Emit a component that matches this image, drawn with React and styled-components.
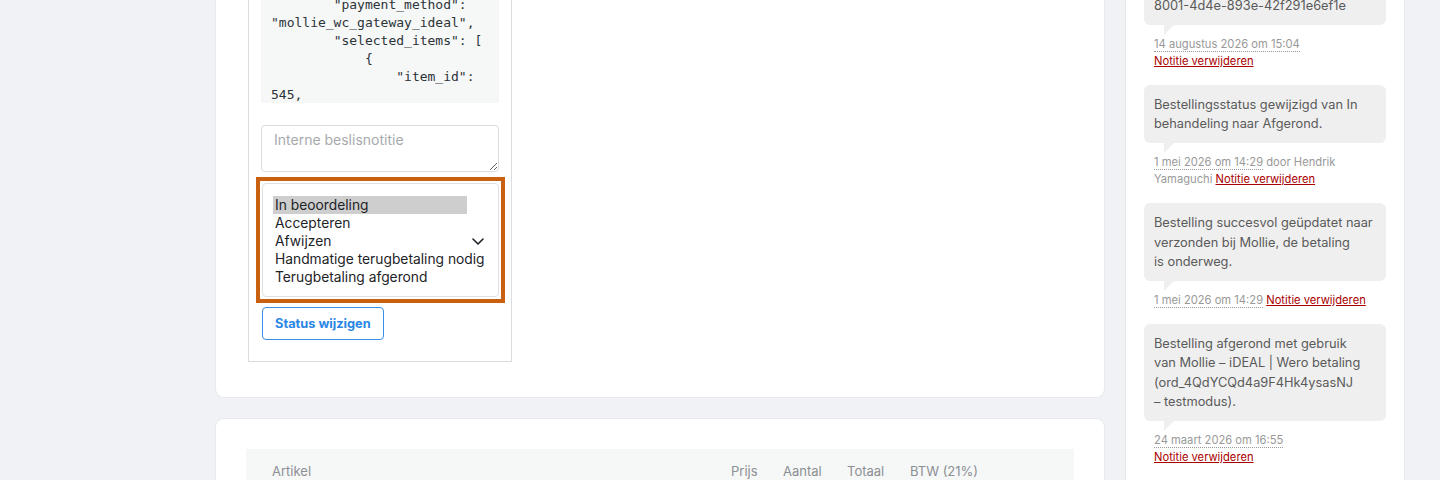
import styled, { createGlobalStyle } from 'styled-components';

const GlobalStyle = createGlobalStyle`
  html, body {
    margin: 0;
    padding: 0;
    overflow: hidden;
    background: #f0f2f6;
  }
  body {
    font-family: Inter, "Noto Sans", sans-serif;
    color: #1d2327;
  }
`;

const payload = `{
    "decision": "pending",
    "request": {
        "payment_method": "mollie_wc_gateway_ideal",
        "selected_items": [
            {
                "item_id": 545,
                "quantity": 1
            }
        ]
    }
}`;

const statuses = [
  'In beoordeling',
  'Accepteren',
  'Afwijzen',
  'Handmatige terugbetaling nodig',
  'Terugbetaling afgerond',
];

// lines are kept as shown in the order screen
const notes = [
  {
    lines: [
      'Mollie-webhook ontvangen voor',
      'transactie ab93c0f2-',
      '8001-4d4e-893e-42f291e6ef1e',
    ],
    date: '14 augustus 2026 om 15:04',
  },
  {
    lines: ['Bestellingsstatus gewijzigd van In', 'behandeling naar Afgerond.'],
    date: '1 mei 2026 om 14:29',
    author: 'Hendrik Yamaguchi',
  },
  {
    lines: [
      'Bestelling succesvol geüpdatet naar',
      'verzonden bij Mollie, de betaling',
      'is onderweg.',
    ],
    date: '1 mei 2026 om 14:29',
  },
  {
    lines: [
      'Bestelling afgerond met gebruik',
      'van Mollie – iDEAL | Wero betaling',
      '(ord_4QdYCQd4a9F4Hk4ysasNJ',
      '– testmodus).',
    ],
    date: '24 maart 2026 om 16:55',
  },
];

export default function App() {
  return (
    <>
      <GlobalStyle />
      <Page>
        <Main>
          <Card $padding="32px 32px 35px">
            <DecisionBox>
              <Payload>{payload}</Payload>
              <NoteField placeholder="Interne beslisnotitie" />
              <Highlight>
                <Listbox role="listbox">
                  {statuses.map((status, i) => (
                    <Option key={status} $selected={i === 0}>
                      {status}
                    </Option>
                  ))}
                  <Chevron width="12" height="7" viewBox="0 0 12 7">
                    <path
                      d="M1 1l5 5 5-5"
                      fill="none"
                      stroke="#1d2327"
                      strokeWidth="1.6"
                      strokeLinecap="round"
                      strokeLinejoin="round"
                    />
                  </Chevron>
                </Listbox>
              </Highlight>
              <OutlineButton type="button">Status wijzigen</OutlineButton>
            </DecisionBox>
          </Card>

          <Card $padding="30px">
            <TableHead>
              <span>Artikel</span>
              <span>Prijs</span>
              <span>Aantal</span>
              <span>Totaal</span>
              <span>BTW (21%)</span>
            </TableHead>
            <TableRow>
              <span>Retourpakket – standaard</span>
              <span>€ 24,95</span>
              <span>× 1</span>
              <span>€ 24,95</span>
              <span>€ 4,33</span>
            </TableRow>
          </Card>
        </Main>

        <Side>
          <SideTitle>Bestelnotities</SideTitle>
          <NoteList>
            {notes.map((note, i) => (
              <Note key={i}>
                <Bubble>
                  {note.lines.map((line, j) => (
                    <BubbleLine key={j}>{line}</BubbleLine>
                  ))}
                </Bubble>
                <Meta>
                  <ExactDate title={note.date}>{note.date}</ExactDate>
                  {note.author ? ` door ${note.author}` : ''}{' '}
                  <DeleteLink href="#">Notitie verwijderen</DeleteLink>
                </Meta>
              </Note>
            ))}
          </NoteList>
        </Side>
      </Page>
    </>
  );
}

const Page = styled.div`
  display: grid;
  grid-template-columns: 888px 278px;
  column-gap: 22px;
  padding-left: 216px;
  margin-top: -113px;
`;

const Main = styled.div`
  display: flex;
  flex-direction: column;
  gap: 22px;
`;

const Card = styled.section`
  background: #fff;
  border-radius: 8px;
  box-shadow: 0 0 0 1px #e6e9ee;
  padding: ${(p) => p.$padding};
`;

const DecisionBox = styled.div`
  box-sizing: border-box;
  width: 264px;
  border: 1px solid #dcdcde;
  padding: 12px 12px 21px;
  display: flex;
  flex-direction: column;
  align-items: flex-start;
`;

const Payload = styled.pre`
  box-sizing: border-box;
  width: 238px;
  max-height: 171px;
  overflow: hidden;
  margin: 0;
  padding: 10px;
  background: #f6f7f7;
  color: #2c3338;
  font-family: "DejaVu Sans Mono", "Liberation Mono", monospace;
  font-size: 13px;
  line-height: 18px;
  white-space: pre-wrap;
`;

const NoteField = styled.textarea`
  box-sizing: border-box;
  width: 238px;
  height: 47px;
  margin-top: 22px;
  padding: 4px 12px;
  border: 1px solid #dcdcde;
  border-radius: 4px;
  font-family: Inter, "Noto Sans", sans-serif;
  font-size: 14px;
  line-height: 20px;
  color: #1d2327;
  &::placeholder {
    color: #a7aaad;
  }
`;

const Highlight = styled.div`
  margin-top: 11px;
  margin-left: 1px;
  outline: 4px solid #c8600f;
  outline-offset: 2px;
`;

const Listbox = styled.div`
  box-sizing: border-box;
  position: relative;
  width: 237px;
  height: 114px;
  padding: 12px 10px;
  border: 1px solid #e0e0e2;
  border-radius: 4px;
  background: #fff;
  font-size: 13.8px;
  line-height: 18px;
  color: #1d2327;
`;

const Option = styled.div`
  box-sizing: border-box;
  width: 194px;
  padding: 0 2px;
  white-space: nowrap;
  background: ${(p) => (p.$selected ? '#cecece' : 'transparent')};
`;

const Chevron = styled.svg`
  position: absolute;
  right: 14px;
  top: 54px;
`;

const OutlineButton = styled.button`
  margin-top: 10px;
  margin-left: 1px;
  height: 33px;
  padding: 0 12px;
  border: 1px solid #3a8fe9;
  border-radius: 4px;
  background: #fff;
  color: #2b86e5;
  font-family: Inter, "Noto Sans", sans-serif;
  font-size: 12.8px;
  font-weight: 700;
`;

const columns = `
  display: grid;
  grid-template-columns: 459px 52px 64px 63px 1fr;
  padding: 12px 26px;
  font-size: 13px;
  line-height: 20px;
`;

const TableHead = styled.div`
  ${columns}
  background: #f6f7f7;
  color: #8c8f94;
`;

const TableRow = styled.div`
  ${columns}
  color: #2c3338;
  border-bottom: 1px solid #eee;
`;

const Side = styled.aside`
  background: #fff;
  box-shadow: 0 0 0 1px #e6e9ee;
  padding: 18px;
  min-height: 800px;
`;

const SideTitle = styled.h3`
  margin: 0 0 22px;
  font-size: 14px;
  line-height: 20px;
  font-weight: 600;
`;

const NoteList = styled.ul`
  list-style: none;
  margin: 0;
  padding: 0;
`;

const Note = styled.li`
  margin-bottom: 5px;
`;

const Bubble = styled.div`
  position: relative;
  padding: 10px;
  background: #efefef;
  border-radius: 6px;
  color: #5a5a5a;
  font-size: 12.8px;
  line-height: 19.25px;

  &::after {
    content: '';
    position: absolute;
    bottom: -10px;
    left: 20px;
    width: 0;
    height: 0;
    border-style: solid;
    border-width: 10px 10px 0 0;
    border-color: #efefef transparent;
  }
`;

const BubbleLine = styled.span`
  display: block;
  white-space: nowrap;
`;

const Meta = styled.p`
  margin: 0;
  padding: 11px 10px 10px;
  color: #999;
  font-size: 11.2px;
  line-height: 17px;
`;

const ExactDate = styled.abbr`
  text-decoration: none;
  border-bottom: 1px dotted #999;
`;

const DeleteLink = styled.a`
  color: #a00;
  text-decoration: underline;
  white-space: nowrap;
`;
